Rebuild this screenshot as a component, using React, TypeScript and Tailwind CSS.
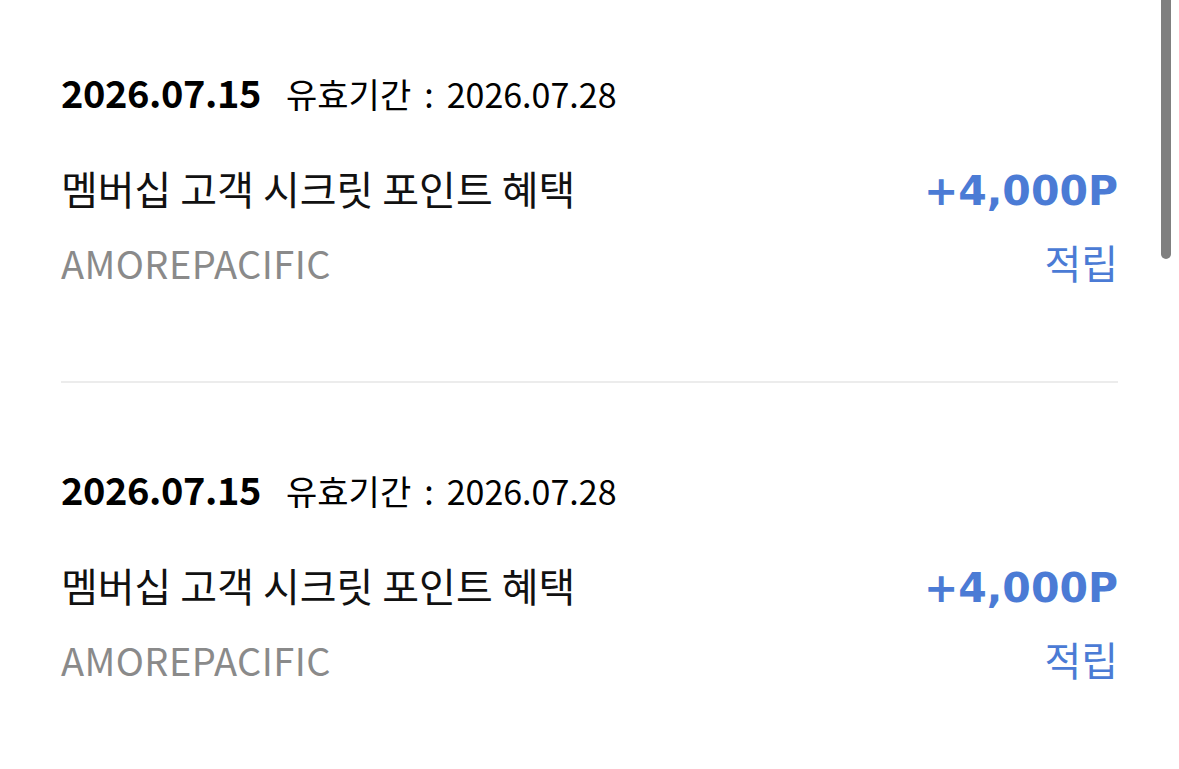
import React from "react";

type Entry = {
  date: string;
  expires: string;
  title: string;
  brand: string;
  amount: string;
  kind: string;
};

const entries: Entry[] = [
  {
    date: "2026.07.15",
    expires: "2026.07.28",
    title: "멤버십 고객 시크릿 포인트 혜택",
    brand: "AMOREPACIFIC",
    amount: "+4,000P",
    kind: "적립",
  },
  {
    date: "2026.07.15",
    expires: "2026.07.28",
    title: "멤버십 고객 시크릿 포인트 혜택",
    brand: "AMOREPACIFIC",
    amount: "+4,000P",
    kind: "적립",
  },
];

function PointRow({ e, first, last }: { e: Entry; first: boolean; last: boolean }) {
  return (
    <div
      className={
        (first ? "pt-[70px] " : "pt-[84px] ") +
        (last ? "pb-[60px]" : "pb-[94px] border-b-2 border-[#ececec]")
      }
    >
      <div className="flex items-baseline leading-[44px]">
        <span className="text-[38px] font-bold text-black tracking-[-0.4px]">{e.date}</span>
        <span className="ml-[25px] text-[34px] text-black">
          유효기간
          <span className="mx-[13px]">:</span>
          {e.expires}
        </span>
      </div>
      <div className="mt-[48px] flex items-baseline justify-between leading-[48px]">
        <span className="text-[40px] text-[#111111]">{e.title}</span>
        <span
          className="text-[41px] font-bold text-[#4b7bd5]"
          style={{ fontFamily: '"DejaVu Sans", "Noto Sans", sans-serif' }}
        >
          {e.amount}
        </span>
      </div>
      <div className="mt-[23px] flex items-baseline justify-between leading-[48px]">
        <span className="text-[38px] text-[#8a8a8a] tracking-[0.4px]">{e.brand}</span>
        <span className="text-[40px] text-[#4b7bd5]">{e.kind}</span>
      </div>
    </div>
  );
}

export default function App() {
  return (
    <div
      className="relative w-[1179px] h-[769px] overflow-hidden bg-white"
      style={{ fontFamily: '"Noto Sans CJK KR", "Noto Sans", sans-serif' }}
    >
      <div className="ml-[61px] mr-[61px]">
        {entries.map((e, i) => (
          <PointRow key={i} e={e} first={i === 0} last={i === entries.length - 1} />
        ))}
      </div>
      <div className="absolute right-[8px] top-0 h-[259px] w-[10px] rounded-b-full bg-[#7f7f7f]" />
    </div>
  );
}
